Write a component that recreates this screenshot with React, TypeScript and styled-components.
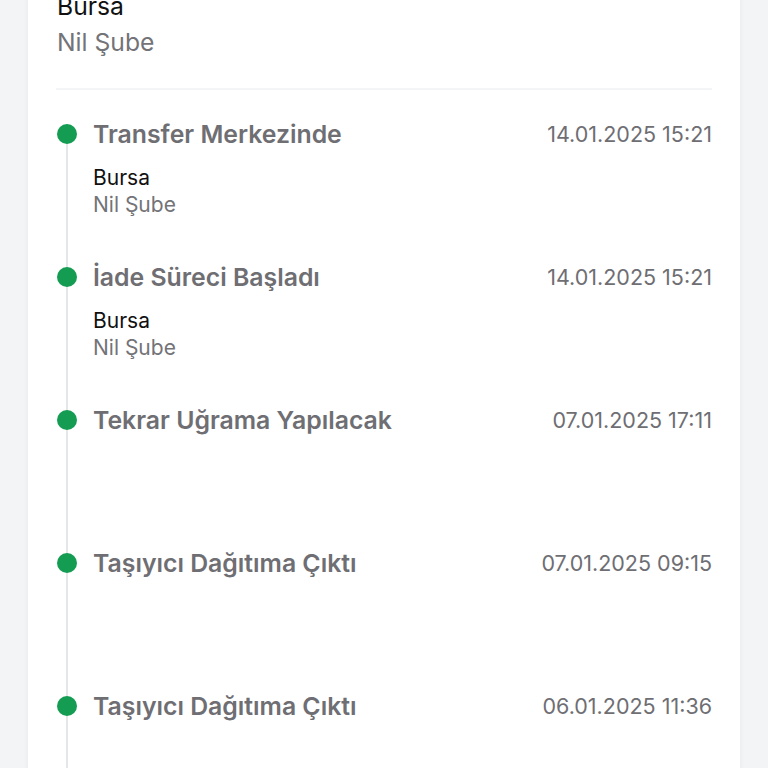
import styled, { createGlobalStyle } from 'styled-components';

interface TrackingEvent {
  title: string;
  date: string;
  city?: string;
  branch?: string;
}

const events: TrackingEvent[] = [
  { title: 'Transfer Merkezinde', date: '14.01.2025 15:21', city: 'Bursa', branch: 'Nil Şube' },
  { title: 'İade Süreci Başladı', date: '14.01.2025 15:21', city: 'Bursa', branch: 'Nil Şube' },
  { title: 'Tekrar Uğrama Yapılacak', date: '07.01.2025 17:11' },
  { title: 'Taşıyıcı Dağıtıma Çıktı', date: '07.01.2025 09:15' },
  { title: 'Taşıyıcı Dağıtıma Çıktı', date: '06.01.2025 11:36' },
];

const App = () => {
  return (
    <>
      <GlobalStyle />
      <Page>
        <Card>
          <Header>
            <City $large>Bursa</City>
            <Branch $large>Nil Şube</Branch>
          </Header>
          <Divider />
          <Timeline>
            {events.map((ev, i) => (
              <Item key={i}>
                <Rail $first={i === 0}>
                  <Dot />
                </Rail>
                <Body>
                  <TitleRow>
                    <Title>{ev.title}</Title>
                    <Date>{ev.date}</Date>
                  </TitleRow>
                  {ev.city && (
                    <Location>
                      <City>{ev.city}</City>
                      <Branch>{ev.branch}</Branch>
                    </Location>
                  )}
                </Body>
              </Item>
            ))}
          </Timeline>
        </Card>
      </Page>
    </>
  );
};

export default App;

const GlobalStyle = createGlobalStyle`
  html, body {
    margin: 0;
    padding: 0;
    background: #f3f4f6;
    font-family: Inter, 'Noto Sans', sans-serif;
    overflow: hidden;
  }
`;

const Page = styled.div`
  height: 768px;
  overflow: hidden;
  padding: 0 28px;
`;

const Card = styled.div`
  background: #ffffff;
  padding: 0 28px;
  min-height: 900px;
  box-shadow: 0 0 6px rgba(0, 0, 0, 0.05);
`;

const Header = styled.div`
  display: flex;
  flex-direction: column;
  margin-top: -12px;
  padding-left: 1px;
`;

const City = styled.div<{ $large?: boolean }>`
  color: #111111;
  font-size: ${p => (p.$large ? '24.7px' : '21px')};
  line-height: ${p => (p.$large ? '36px' : '27px')};
`;

const Branch = styled.div<{ $large?: boolean }>`
  color: #737378;
  font-size: ${p => (p.$large ? '24.7px' : '21px')};
  line-height: ${p => (p.$large ? '36px' : '27px')};
`;

const Divider = styled.div`
  height: 2px;
  background: #f4f5f6;
  margin-top: 28px;
`;

const Timeline = styled.div`
  display: flex;
  flex-direction: column;
  padding-top: 28px;
`;

const Item = styled.div`
  display: grid;
  grid-template-columns: 22px 1fr;
  column-gap: 15px;
  min-height: 143px;
`;

const Rail = styled.div<{ $first?: boolean }>`
  display: flex;
  justify-content: center;
  align-items: flex-start;
  background: linear-gradient(#e5e6e8, #e5e6e8) center bottom / 2px
    ${p => (p.$first ? 'calc(100% - 16px)' : '100%')} no-repeat;
`;

const Dot = styled.div`
  width: 20px;
  height: 20px;
  margin-top: 6px;
  border-radius: 50%;
  background: #149c52;
`;

const Body = styled.div`
  display: flex;
  flex-direction: column;
`;

const TitleRow = styled.div`
  display: flex;
  justify-content: space-between;
  align-items: center;
  height: 32px;
`;

const Title = styled.div`
  color: #6e6e73;
  font-size: 24.8px;
  font-weight: 600;
  line-height: 32px;
`;

const Date = styled.div`
  color: #6e6e73;
  font-size: 21.5px;
  line-height: 32px;
`;

const Location = styled.div`
  display: flex;
  flex-direction: column;
  margin-top: 14px;
`;
